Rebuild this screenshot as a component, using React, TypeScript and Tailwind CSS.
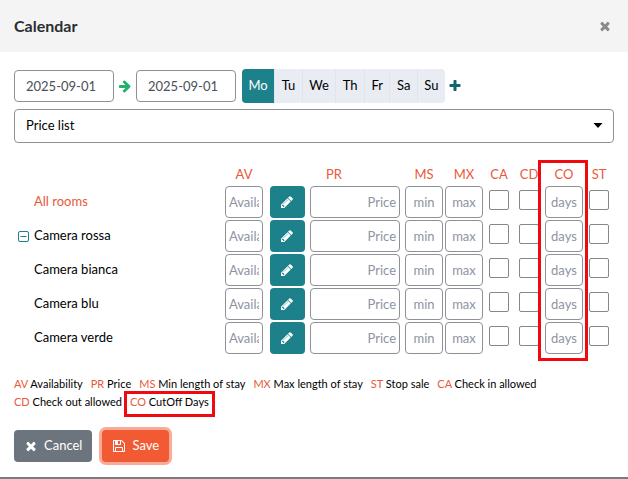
import React, { useState } from 'react';

const rooms = [
  { id: 'all', name: 'All rooms', all: true },
  { id: 'rossa', name: 'Camera rossa', toggle: true },
  { id: 'bianca', name: 'Camera bianca' },
  { id: 'blu', name: 'Camera blu' },
  { id: 'verde', name: 'Camera verde' },
];

const weekDays = ['Mo', 'Tu', 'We', 'Th', 'Fr', 'Sa', 'Su'];

const legend = [
  { code: 'AV', label: 'Availability' },
  { code: 'PR', label: 'Price' },
  { code: 'MS', label: 'Min length of stay' },
  { code: 'MX', label: 'Max length of stay' },
  { code: 'ST', label: 'Stop sale' },
  { code: 'CA', label: 'Check in allowed' },
  { code: 'CD', label: 'Check out allowed' },
  { code: 'CO', label: 'CutOff Days', marked: true },
];

const icons = {
  times: 'M1490 1322q0 40-28 68l-136 136q-28 28-68 28t-68-28l-294-294-294 294q-28 28-68 28t-68-28l-136-136q-28-28-28-68t28-68l294-294-294-294q-28-28-28-68t28-68l136-136q28-28 68-28t68 28l294 294 294-294q28-28 68-28t68 28l136 136q28 28 28 68t-28 68l-294 294 294 294q28 28 28 68z',
  pencil: 'M491 1536l91-91-235-235-91 91v107h128v128h107zm523-928q0-22-22-22-10 0-17 7l-542 542q-7 7-7 17 0 22 22 22 10 0 17-7l542-542q7-7 7-17zm-54-192l416 416-832 832h-416v-416zm683 96q0 53-37 90l-166 166-416-416 166-165q36-38 90-38 53 0 91 38l235 234q37 39 37 91z',
  arrow: 'M1600 960q0 54-37 91l-651 651q-39 37-91 37-51 0-90-37l-75-75q-38-38-38-91t38-91l293-293h-704q-52 0-84.5-37.5t-32.5-90.5v-128q0-53 32.5-90.5t84.5-37.5h704l-293-294q-38-36-38-90t38-90l75-75q38-38 90-38 53 0 91 38l651 651q37 35 37 90z',
  plus: 'M1600 736v192q0 40-28 68t-68 28h-416v416q0 40-28 68t-68 28h-192q-40 0-68-28t-28-68v-416h-416q-40 0-68-28t-28-68v-192q0-40 28-68t68-28h416v-416q0-40 28-68t68-28h192q40 0 68 28t28 68v416h416q40 0 68 28t28 68z',
  save: 'M512 1536h768v-384h-768v384zm896 0h128v-896q0-14-10-38.5t-20-34.5l-281-281q-10-10-34-20t-39-10v416q0 40-28 68t-68 28h-576q-40 0-68-28t-28-68v-416h-128v1280h128v-416q0-40 28-68t68-28h832q40 0 68 28t28 68v416zm-384-928v-320q0-13-9.5-22.5t-22.5-9.5h-192q-13 0-22.5 9.5t-9.5 22.5v320q0 13 9.5 22.5t22.5 9.5h192q13 0 22.5-9.5t9.5-22.5zm640 32v928q0 40-28 68t-68 28h-1344q-40 0-68-28t-28-68v-1344q0-40 28-68t68-28h928q40 0 88 20t76 48l280 280q28 28 48 76t20 88z',
};

function Icon({ name }: { name: keyof typeof icons }) {
  return (
    <svg viewBox="0 0 1792 1792" className="w-3.5 h-3.5 shrink-0" fill="currentColor" aria-hidden="true">
      <path d={icons[name]} />
    </svg>
  );
}

const field = 'block h-8 w-full rounded border border-[#8f9196] bg-white text-[13px] text-[#495057] placeholder:text-[#8e93a3] outline-none';
const box = 'block mx-auto mb-1 w-5 h-5 appearance-none rounded-xs border border-[#85878b] bg-white checked:bg-[#1c818a]';

function RoomRow({ room }: { room: (typeof rooms)[number] }) {
  return (
    <tr className="h-[34px]">
      <th scope="row" className="p-0 text-left font-normal">
        <div className="flex items-center">
          <span className="w-5 shrink-0 pl-1">
            {room.toggle && (
              <button type="button" aria-label="Collapse" className="block text-[#1c818a]">
                <svg viewBox="0 0 11 11" className="w-[11px] h-[11px]" fill="none" stroke="currentColor" aria-hidden="true">
                  <rect x="0.5" y="0.5" width="10" height="10" rx="1.5" />
                  <path d="M2.5 5.5h6" />
                </svg>
              </button>
            )}
          </span>
          <span className={room.all ? 'text-[#e8593b]' : 'text-black'}>{room.name}</span>
        </div>
      </th>
      <td className="px-px py-0"><input className={`${field} px-[3px]`} placeholder="Availability" aria-label={`${room.name} availability`} /></td>
      <td className="pl-1.5 pr-1 py-0">
        <button type="button" aria-label={`Edit ${room.name}`} className="flex h-8 w-full items-center justify-center rounded bg-[#1c818a] text-white">
          <Icon name="pencil" />
        </button>
      </td>
      <td className="pl-px pr-1 py-0"><input className={`${field} px-[3px] text-right`} placeholder="Price" aria-label={`${room.name} price`} /></td>
      <td className="px-px py-0"><input className={`${field} text-center`} placeholder="min" aria-label={`${room.name} min stay`} /></td>
      <td className="px-px py-0"><input className={`${field} text-center`} placeholder="max" aria-label={`${room.name} max stay`} /></td>
      <td className="p-0"><input type="checkbox" className={box} aria-label={`${room.name} check in allowed`} /></td>
      <td className="p-0"><input type="checkbox" className={box} aria-label={`${room.name} check out allowed`} /></td>
      <td className="px-px py-0"><input className={`${field} text-center`} placeholder="days" aria-label={`${room.name} cutoff days`} /></td>
      <td className="p-0"><input type="checkbox" className={box} aria-label={`${room.name} stop sale`} /></td>
    </tr>
  );
}

export default function App() {
  const [from, setFrom] = useState('2025-09-01');
  const [to, setTo] = useState('2025-09-01');
  const [day, setDay] = useState('Mo');

  return (
    <div className="border-b-2 border-[#7b7b7b] bg-white font-['Lato',sans-serif] text-[13px] text-black">
      <header className="flex h-[52px] items-center justify-between bg-[#f4f4f4] pl-3.5 pr-4">
        <h1 className="text-base font-bold text-[#2b2d31]">Calendar</h1>
        <button type="button" aria-label="Close" className="text-[#8b8b8b]"><Icon name="times" /></button>
      </header>

      <div className="px-3.5 pt-[17px] pb-[15px]">
        <div className="flex items-center">
          <input className={`${field} max-w-[100px] pl-[11px]`} aria-label="From" value={from} onChange={e => setFrom(e.target.value)} />
          <span className="flex w-[22px] shrink-0 justify-center text-[#24b16c]"><Icon name="arrow" /></span>
          <input className={`${field} max-w-[100px] pl-[11px]`} aria-label="To" value={to} onChange={e => setTo(e.target.value)} />
          <div className="ml-1.5 flex h-[34px] w-[203px] shrink-0 divide-x divide-[#e1e5ed] overflow-hidden rounded bg-[#e9ecf2]">
            {weekDays.map(d => (
              <button
                key={d}
                type="button"
                onClick={() => setDay(d)}
                className={`flex-auto text-center ${d === day ? 'bg-[#1c818a] text-white' : 'text-black'}`}
              >{d}</button>
            ))}
          </div>
          <button type="button" aria-label="Add period" className="ml-[3px] text-[#12646b]"><Icon name="plus" /></button>
        </div>

        <div className="relative mt-1.5">
          <select aria-label="Price list" className="block h-[34px] w-full appearance-none rounded border border-[#8f9196] bg-white pl-[11px] text-[13px] text-black outline-none">
            <option>Price list</option>
          </select>
          <svg viewBox="0 0 10 5" className="pointer-events-none absolute right-[11px] top-3.5 h-[5px] w-2.5" aria-hidden="true">
            <path d="M0.5 0h9L5 5z" />
          </svg>
        </div>

        <div className="relative mt-[21px]">
          <table className="w-full table-fixed border-collapse">
            <colgroup>
              <col />
              <col className="w-10" />
              <col className="w-[45px]" />
              <col className="w-[95px]" />
              <col className="w-10" />
              <col className="w-10" />
              <col className="w-[30px]" />
              <col className="w-[30px]" />
              <col className="w-10" />
              <col className="w-[30px]" />
            </colgroup>
            <thead>
              <tr className="h-[21px] leading-[18px] text-[#e8593b]">
                <td className="p-0" />
                <th className="p-0 pb-0.5 font-normal">AV</th>
                <th className="p-0 pb-0.5 font-normal" colSpan={2}>PR</th>
                <th className="p-0 pb-0.5 font-normal">MS</th>
                <th className="p-0 pb-0.5 font-normal">MX</th>
                <th className="p-0 pb-0.5 font-normal">CA</th>
                <th className="p-0 pb-0.5 font-normal">CD</th>
                <th className="p-0 pb-0.5 font-normal">CO</th>
                <th className="p-0 pb-0.5 font-normal">ST</th>
              </tr>
            </thead>
            <tbody>
              {rooms.map(r => <RoomRow key={r.id} room={r} />)}
            </tbody>
          </table>
          {/* cutoff column marker */}
          <div className="pointer-events-none absolute -top-1 -bottom-1.5 right-[26px] w-[50px] border-3 border-[#f00a0f]" />
        </div>

        <div className="mt-5 flex flex-wrap gap-x-2 text-[11px] leading-[18px]">
          {legend.map(l => (
            <span key={l.code} className="relative whitespace-nowrap">
              <span className="text-[#e8593b]">{l.code}</span> {l.label}
              {l.marked && <span className="absolute -inset-x-1.5 -top-0.5 -bottom-1.5 border-3 border-[#f00a0f]" />}
            </span>
          ))}
        </div>

        <div className="mt-[19px] flex gap-2.5">
          <button type="button" className="flex h-8 items-center gap-1.5 rounded bg-[#6c757d] px-2.5 text-white">
            <Icon name="times" /> Cancel
          </button>
          <button type="button" className="flex h-8 items-center gap-1.5 rounded bg-[#f15a33] px-2.5 text-white ring-3 ring-[#f7ab98]">
            <Icon name="save" /> Save
          </button>
        </div>
      </div>
    </div>
  );
}
